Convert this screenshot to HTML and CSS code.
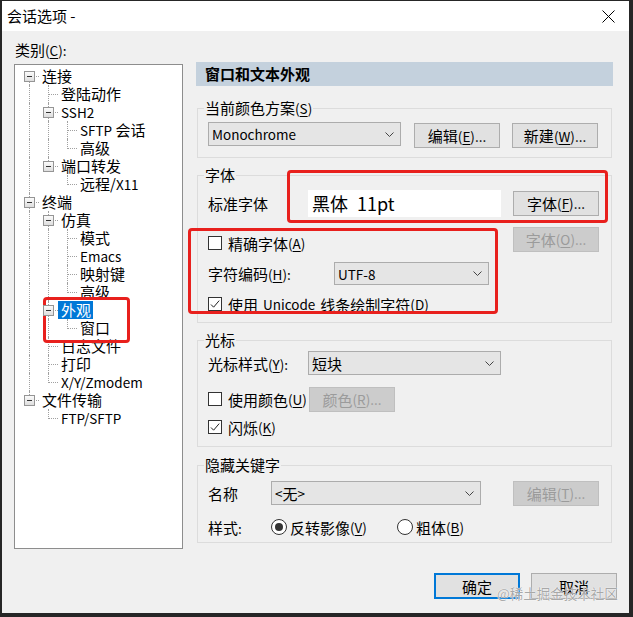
FILE: index.html
```html
<!DOCTYPE html>
<html lang="zh-CN">
<head>
<meta charset="utf-8">
<title>会话选项</title>
<link rel="stylesheet" href="styles.css">
</head>
<body>
<div class="window">
  <div class="titlebar">
    <span class="title">会话选项 -</span>
    <svg class="close" width="13" height="13" viewBox="0 0 13 13"><path d="M0.5 0.5L12.5 12.5M12.5 0.5L0.5 12.5" stroke="#000" stroke-width="1" fill="none"/></svg>
  </div>
  <div class="body">
    <div class="main">
      <div class="left">
        <div class="cat-label">类别<span class="l">(<u>C</u>):</span></div>
        <div class="tree">
          <div class="row"><i class="c s"><b class="bx"></b></i><span class="tx">连接</span></div>
          <div class="row"><i class="c v"></i><i class="c t"></i><span class="tx">登陆动作</span></div>
          <div class="row"><i class="c v"></i><i class="c t"><b class="bx"></b></i><span class="tx l">SSH2</span></div>
          <div class="row"><i class="c v"></i><i class="c v"></i><i class="c t"></i><span class="tx"><span class="l">SFTP</span> 会话</span></div>
          <div class="row"><i class="c v"></i><i class="c v"></i><i class="c e"></i><span class="tx">高级</span></div>
          <div class="row"><i class="c v"></i><i class="c e"><b class="bx"></b></i><span class="tx">端口转发</span></div>
          <div class="row"><i class="c v"></i><i class="c"></i><i class="c e"></i><span class="tx">远程/<span class="l">X11</span></span></div>
          <div class="row"><i class="c t"><b class="bx"></b></i><span class="tx">终端</span></div>
          <div class="row"><i class="c v"></i><i class="c t"><b class="bx"></b></i><span class="tx">仿真</span></div>
          <div class="row"><i class="c v"></i><i class="c v"></i><i class="c t"></i><span class="tx">模式</span></div>
          <div class="row"><i class="c v"></i><i class="c v"></i><i class="c t"></i><span class="tx l">Emacs</span></div>
          <div class="row"><i class="c v"></i><i class="c v"></i><i class="c t"></i><span class="tx">映射键</span></div>
          <div class="row"><i class="c v"></i><i class="c v"></i><i class="c e"></i><span class="tx">高级</span></div>
          <div class="row"><i class="c v"></i><i class="c t"><b class="bx"></b></i><span class="tx sel">外观</span></div>
          <div class="row"><i class="c v"></i><i class="c v"></i><i class="c e"></i><span class="tx">窗口</span></div>
          <div class="row"><i class="c v"></i><i class="c t"></i><span class="tx">日志文件</span></div>
          <div class="row"><i class="c v"></i><i class="c t"></i><span class="tx">打印</span></div>
          <div class="row"><i class="c v"></i><i class="c e"></i><span class="tx l">X/Y/Zmodem</span></div>
          <div class="row"><i class="c e"><b class="bx"></b></i><span class="tx">文件传输</span></div>
          <div class="row"><i class="c"></i><i class="c e"></i><span class="tx l">FTP/SFTP</span></div>
        </div>
      </div>
      <div class="right">
        <div class="header">窗口和文本外观</div>

        <fieldset class="group g1">
          <legend>当前颜色方案<span class="l">(<u>S</u>)</span></legend>
          <div class="row-flex r-scheme">
            <div class="combo w-scheme"><span class="l">Monochrome</span><svg class="chev" width="9" height="5" viewBox="0 0 9 5"><path d="M0.5 0.5L4.5 4.5L8.5 0.5" stroke="#444" fill="none"/></svg></div>
            <div class="btn b-edit">编辑<span class="l">(<u>E</u>)...</span></div>
            <div class="btn b-new">新建<span class="l">(<u>W</u>)...</span></div>
          </div>
        </fieldset>

        <fieldset class="group g2">
          <legend>字体</legend>
          <div class="row-flex r-font">
            <span class="lbl w100">标准字体</span>
            <div class="fontfield">黑体<span class="pt">11pt</span></div>
            <div class="btn push-right">字体<span class="l">(<u>F</u>)...</span></div>
          </div>
          <div class="row-flex r-precise">
            <label class="chk low"><span class="box"></span>精确字体<span class="l">(<u>A</u>)</span></label>
            <div class="btn dis push-right">字体<span class="l">(<u>O</u>)...</span></div>
          </div>
          <div class="row-flex r-enc">
            <span class="lbl w126">字符编码<span class="l">(<u>H</u>):</span></span>
            <div class="combo w-enc"><span class="l">UTF-8</span><svg class="chev" width="9" height="5" viewBox="0 0 9 5"><path d="M0.5 0.5L4.5 4.5L8.5 0.5" stroke="#444" fill="none"/></svg></div>
          </div>
          <div class="row-flex r-uni">
            <label class="chk"><span class="box on"><svg width="12" height="12" viewBox="0 0 12 12"><path d="M2 6.5L4.6 9.2L10.2 2.6" stroke="#222" fill="none"/></svg></span>使用<span class="l sp">Unicode</span>线条绘制字符<span class="l">(<u>D</u>)</span></label>
          </div>
        </fieldset>

        <fieldset class="group g3">
          <legend>光标</legend>
          <div class="row-flex r-cur">
            <span class="lbl w100">光标样式<span class="l">(<u>Y</u>):</span></span>
            <div class="combo w-cur">短块<svg class="chev" width="9" height="5" viewBox="0 0 9 5"><path d="M0.5 0.5L4.5 4.5L8.5 0.5" stroke="#444" fill="none"/></svg></div>
          </div>
          <div class="row-flex r-color">
            <label class="chk clip"><span class="box"></span>使用颜色<span class="l">(<u>U</u>)</span></label>
            <div class="btn dis b-color">颜色<span class="l">(<u>R</u>)...</span></div>
          </div>
          <div class="row-flex r-blink">
            <label class="chk"><span class="box on"><svg width="12" height="12" viewBox="0 0 12 12"><path d="M2 6.5L4.6 9.2L10.2 2.6" stroke="#222" fill="none"/></svg></span>闪烁<span class="l">(<u>K</u>)</span></label>
          </div>
        </fieldset>

        <fieldset class="group g4">
          <legend>隐藏关键字</legend>
          <div class="row-flex r-name">
            <span class="lbl w63">名称</span>
            <div class="combo w-name"><span class="l">&lt;</span>无<span class="l">&gt;</span><span class="grow"></span><svg class="chev" width="9" height="5" viewBox="0 0 9 5"><path d="M0.5 0.5L4.5 4.5L8.5 0.5" stroke="#444" fill="none"/></svg></div>
            <div class="btn dis push-right">编辑<span class="l">(<u>T</u>)...</span></div>
          </div>
          <div class="row-flex r-style">
            <span class="lbl w63">样式<span class="l">:</span></span>
            <label class="radio w126"><span class="dot on"></span>反转影像<span class="l">(<u>V</u>)</span></label>
            <label class="radio"><span class="dot"></span>粗体<span class="l">(<u>B</u>)</span></label>
          </div>
        </fieldset>
      </div>
    </div>
    <div class="footer">
      <div class="btn def">确定</div>
      <div class="btn">取消</div>
    </div>
  </div>

  <div class="mark mark-tree"></div>
  <div class="mark mark-font"></div>
  <div class="mark mark-enc"></div>
  <div class="watermark">@稀土掘金技术社区</div>
</div>
</body>
</html>
```

FILE: styles.css
```css
* { box-sizing: border-box; }
html, body { margin: 0; padding: 0; }
body {
  width: 633px;
  height: 617px;
  overflow: hidden;
  background: #222;
  font-family: "Noto Sans CJK SC", "Microsoft YaHei", sans-serif;
  font-size: 15px;
  color: #000;
}
.l { font-size: 13.5px; }
.sp { margin: 0 5px; }
u { text-decoration: underline; text-underline-offset: 2px; }

.window {
  position: relative;
  width: 633px;
  height: 617px;
  border-style: solid;
  border-color: #262626;
  border-width: 1px 4px 4px 2px;
  background: #f0f0f0;
  display: flex;
  flex-direction: column;
}

.titlebar {
  height: 30px;
  background: #fff;
  display: flex;
  align-items: center;
  justify-content: space-between;
  padding: 0 14px 0 5px;
  line-height: 20px;
}
.close { display: block; }

.body {
  flex: 1;
  display: flex;
  flex-direction: column;
  padding: 0 12px;
}
.main {
  display: flex;
  gap: 13px;
  height: 518px;
}
.left { width: 169px; }
.cat-label {
  margin-top: 9px;
  height: 20px;
  line-height: 20px;
  padding-left: 1px;
}

/* tree */
.tree {
  margin-top: 4px;
  height: 485px;
  background: #fff;
  border: 1px solid #8d8d8d;
  padding: 2px 0 0 5px;
}
.row {
  display: flex;
  height: 18px;
  line-height: 18px;
  white-space: nowrap;
}
.c {
  position: relative;
  flex: 0 0 19px;
  width: 19px;
  height: 18px;
}
.c.v::before, .c.t::before, .c.e::before, .c.s::before {
  content: "";
  position: absolute;
  left: 9px;
  border-left: 1px dotted #a0a0a0;
}
.c.v::before, .c.t::before { top: 0; bottom: 0; }
.c.e::before { top: 0; height: 10px; }
.c.s::before { top: 9px; bottom: 0; }
.c.t::after, .c.e::after, .c.s::after {
  content: "";
  position: absolute;
  left: 10px;
  right: 0;
  top: 9px;
  border-top: 1px dotted #a0a0a0;
}
.bx {
  position: absolute;
  z-index: 1;
  left: 4px;
  top: 4px;
  width: 11px;
  height: 11px;
  border: 1px solid #959595;
  background: linear-gradient(#fbfbfb, #dedede);
}
.bx::after {
  content: "";
  position: absolute;
  left: 2px;
  top: 4px;
  width: 5px;
  height: 1px;
  background: #333;
}
.tx {
  padding: 0 2px 0 3px;
  height: 18px;
}
.tx.sel {
  background: #0078d7;
  color: #fff;
}

/* right */
.right {
  width: 417px;
  padding-top: 31px;
}
.header {
  height: 24px;
  line-height: 24px;
  background: #c4d1dd;
  font-weight: 700;
  padding-left: 9px;
}
.group {
  margin: 0 1px;
  border: 1px solid #dcdcdc;
  padding: 0 12px 0 10px;
  min-width: 0;
}
.group legend {
  padding: 0 1px;
  margin-left: -4px;
  line-height: 20px;
  height: 20px;
}
.g1 { margin-top: 12px; padding-top: 4px; padding-bottom: 10px; }
.g2 { margin-top: 7px; padding-top: 4px; padding-bottom: 9px; }
.g3 { margin-top: 7px; padding-top: 1px; padding-bottom: 10px; }
.g4 { margin-top: 8px; padding-top: 5px; padding-bottom: 5px; }

.row-flex {
  display: flex;
  align-items: center;
  white-space: nowrap;
}
.push-right { margin-left: auto; }
.lbl { display: block; }
.w63 { width: 63px; flex: 0 0 63px; }
.w100 { width: 100px; flex: 0 0 100px; }
.w126 { width: 126px; flex: 0 0 126px; }

.combo {
  height: 24px;
  background: #e5e5e5;
  border: 1px solid #acacac;
  display: flex;
  align-items: center;
  justify-content: space-between;
  padding: 0 6px 0 3px;
}
.combo .grow { flex: 1; }
.chev { display: block; }
.w-scheme { width: 193px; }
.w-enc { width: 155px; }
.w-cur { width: 193px; }
.w-name { width: 210px; }

.btn {
  width: 86px;
  height: 25px;
  background: #e1e1e1;
  border: 1px solid #adadad;
  display: flex;
  align-items: center;
  justify-content: center;
  white-space: nowrap;
}
.btn.dis {
  background: #cccccc;
  border-color: #bfbfbf;
  color: #9b9b9b;
}
.btn.def {
  border: 2px solid #0078d7;
}

.r-scheme { align-items: flex-start; height: 25px; }
.b-edit { margin-left: 13px; margin-top: 1px; }
.b-new { margin-left: 12px; margin-top: 1px; }

.r-font { height: 28px; }
.fontfield {
  width: 193px;
  height: 27px;
  background: #fff;
  display: flex;
  align-items: center;
  padding-left: 4px;
  font-size: 18px;
  font-weight: 400;
}
.fontfield .pt { margin-left: 9px; }
.r-precise { height: 26px; margin-top: 9px; }
.r-enc { height: 23px; margin-top: 10px; }
.w-enc { height: 23px; }
.r-uni { height: 18px; margin-top: 10px; }

.r-cur { height: 24px; }
.r-color { height: 26px; margin-top: 11px; }
.r-blink { height: 18px; margin-top: 6px; }
.b-color { margin-left: 3px; }

.r-name { height: 26px; }
.r-style { height: 20px; margin-top: 11px; }

.chk {
  display: flex;
  align-items: center;
  height: 18px;
}
.chk.low { margin-top: 8px; }
.chk.clip { width: 98px; overflow: hidden; flex: 0 0 98px; }
.box {
  flex: 0 0 14px;
  width: 14px;
  height: 14px;
  border: 1px solid #333;
  background: #fff;
  margin-right: 6px;
  display: flex;
  align-items: center;
  justify-content: center;
}
.box svg { display: block; }

.radio {
  display: flex;
  align-items: center;
  height: 20px;
}
.dot {
  position: relative;
  width: 16px;
  height: 16px;
  border-radius: 50%;
  border: 1px solid #333;
  background: #fff;
  margin-right: 3px;
}
.dot.on::after {
  content: "";
  position: absolute;
  left: 3px;
  top: 3px;
  width: 8px;
  height: 8px;
  border-radius: 50%;
  background: #333;
}

.footer {
  display: flex;
  justify-content: flex-end;
  gap: 11px;
  margin-top: 24px;
}
.footer .btn { height: 26px; }

/* annotation overlays */
.mark {
  position: absolute;
  border: 3px solid #e8201d;
  border-radius: 4px;
  pointer-events: none;
}
.mark-tree { left: 41px; top: 296px; width: 87px; height: 46px; }
.mark-font { left: 285px; top: 169px; width: 321px; height: 53px; }
.mark-enc { left: 186px; top: 227px; width: 310px; height: 86px; }

.watermark {
  position: absolute;
  left: 495px;
  top: 582px;
  font-size: 13.5px;
  line-height: 20px;
  color: rgba(140, 140, 140, 0.75);
  text-shadow: 0 0 1px #fff, 0 0 1px #fff;
  white-space: nowrap;
  pointer-events: none;
}
```
